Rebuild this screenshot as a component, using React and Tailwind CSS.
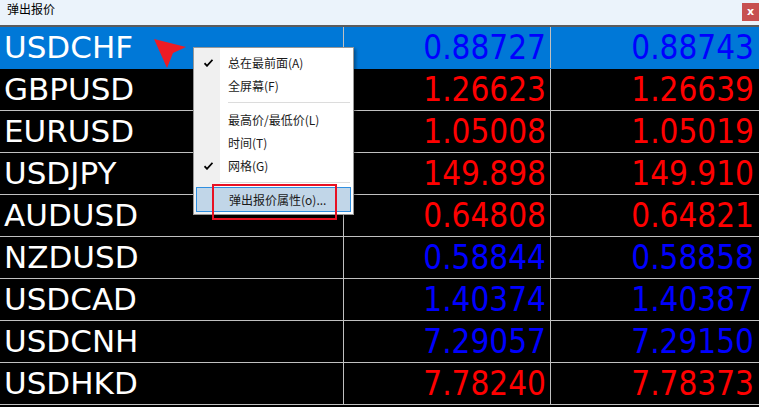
import React from "react";

const rows = [
  ["USDCHF", "0.88727", "0.88743", "blue", true],
  ["GBPUSD", "1.26623", "1.26639", "red"],
  ["EURUSD", "1.05008", "1.05019", "red"],
  ["USDJPY", "149.898", "149.910", "red"],
  ["AUDUSD", "0.64808", "0.64821", "red"],
  ["NZDUSD", "0.58844", "0.58858", "blue"],
  ["USDCAD", "1.40374", "1.40387", "blue"],
  ["USDCNH", "7.29057", "7.29150", "blue"],
  ["USDHKD", "7.78240", "7.78373", "red"],
];

function Check() {
  return (
    <svg width="9" height="8" viewBox="0 0 9 8" className="block">
      <path d="M0.5 4.2 L3 6.8 L8.5 0.8" stroke="#000" strokeWidth="1.8" fill="none" />
    </svg>
  );
}

function Item({ label, checked, h = "h-[23px]" }) {
  return (
    <div className={`flex items-center ${h}`}>
      <div className="w-[27px] flex justify-center pl-[2px]">{checked ? <Check /> : null}</div>
      <div className="pl-[7px] text-[12px] leading-none text-[#1a1a1a]">{label}</div>
    </div>
  );
}

export default function App() {
  const cjk = { fontFamily: '"Noto Sans CJK SC", "Noto Sans", sans-serif' };
  return (
    <div className="relative w-[759px] h-[407px] bg-black overflow-hidden">
      <div className="flex justify-between h-[25px] bg-[#ebf3fb] border-b-2 border-[#5c5c5c] box-content" style={cjk}>
        <div className="pl-[7px] pt-[1px] text-[12px] leading-[16px] text-black">弹出报价</div>
        <div className="mt-[3px] w-[17px] h-[18px] bg-[#c75050] flex items-center justify-center text-white text-[11px] font-bold leading-none pb-[2px]" style={{ fontFamily: '"DejaVu Sans", sans-serif' }}>x</div>
      </div>
      <div className="flex flex-col">
        {rows.map(([sym, bid, ask, color, sel]) => (
          <div
            key={sym}
            className={`flex h-[42px] border-b ${sel ? "bg-[#0078d7] border-[#0078d7]" : "border-[#c0c0c0]"}`}
          >
            <div
              className="w-[344px] border-r border-[#c0c0c0] pl-[4px] text-white text-[31px] leading-[41px]"
              style={{ fontFamily: '"DejaVu Sans", sans-serif' }}
            >
              {sym}
            </div>
            {[bid, ask].map((v, i) => (
              <div
                key={i}
                className={`${i === 0 ? "w-[207px] border-r border-[#c0c0c0] pr-[4px]" : "flex-1 pr-[5px]"} text-right text-[33px] leading-[41px] ${color === "blue" ? "text-[#0000ff]" : "text-[#ff0000]"}`}
                style={{ fontFamily: '"DejaVu Sans Condensed", "DejaVu Sans", sans-serif', fontStretch: "condensed" }}
              >
                {v}
              </div>
            ))}
          </div>
        ))}
      </div>

      {/* red cursor arrow */}
      <svg className="absolute left-0 top-0" width="759" height="407" viewBox="0 0 759 407" style={{ pointerEvents: "none" }}>
        <polygon points="154,39 186,47 173,53 167,68" fill="#ed1c24" />
      </svg>

      {/* context menu */}
      <div
        className="absolute left-[193px] top-[47px] w-[161px] h-[168px] bg-white border border-[#979797] shadow-[2px_2px_3px_rgba(0,0,0,0.35)]"
        style={cjk}
      >
        <div className="absolute left-0 top-0 bottom-0 w-[26px] bg-[#f0f0f0]" />
        <div className="relative flex flex-col pt-[3px]">
          <Item label="总在最前面(A)" checked />
          <Item label="全屏幕(F)" />
          <div className="h-[11px] flex items-center pl-[34px] pr-[3px]">
            <div className="h-px w-full bg-[#dcdcdc]" />
          </div>
          <Item label="最高价/最低价(L)" />
          <Item label="时间(T)" />
          <Item label="网格(G)" checked />
          <div className="h-[10px] flex items-center pl-[26px] pr-[3px]">
            <div className="h-px w-full bg-[#dcdcdc]" />
          </div>
          <div className="mx-[2px] h-[25px] bg-[#c1d6e8] border border-[#2f8fe0] flex items-center">
            <div className="pl-[32px] text-[12px] leading-none text-[#1a1a1a]">弹出报价属性(o)...</div>
          </div>
        </div>
      </div>

      {/* red annotation box */}
      <div className="absolute left-[212px] top-[184px] w-[125px] h-[36px] border-2 border-[#e81123]" />
    </div>
  );
}
